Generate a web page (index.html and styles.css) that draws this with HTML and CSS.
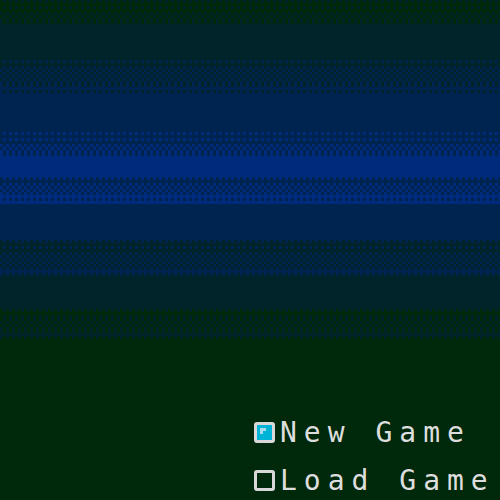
FILE: index.html
```html
<!DOCTYPE html>
<html lang="en">
<head>
    <meta charset="UTF-8">
    <title>Title Screen</title>
    <link rel="stylesheet" href="styles.css">
</head>
<body>
    <div class="screen">
        <!-- dithered sky, top to horizon -->
        <div class="sky">
            <div class="band d25 g-t" style="height:12px"></div>
            <div class="band d50 g-t" style="height:9px"></div>
            <div class="band d75 g-t" style="height:6px"></div>
            <div class="band teal" style="height:33px"></div>
            <div class="band d25 t-n" style="height:9px"></div>
            <div class="band d50 t-n" style="height:15px"></div>
            <div class="band d75 t-n" style="height:12px"></div>
            <div class="band navy" style="height:36px"></div>
            <div class="band d25 n-b" style="height:12px"></div>
            <div class="band d50 n-b" style="height:9px"></div>
            <div class="band d75 n-b" style="height:6px"></div>
            <div class="band blue" style="height:18px"></div>
            <div class="band d75 b-n" style="height:6px"></div>
            <div class="band d50 b-n" style="height:9px"></div>
            <div class="band d25 b-n" style="height:12px"></div>
            <div class="band navy" style="height:36px"></div>
            <div class="band d75 n-t" style="height:12px"></div>
            <div class="band d50 n-t" style="height:15px"></div>
            <div class="band d25 n-t" style="height:9px"></div>
            <div class="band teal" style="height:33px"></div>
            <div class="band d75 t-g" style="height:9px"></div>
            <div class="band d50 t-g" style="height:12px"></div>
            <div class="band d25 t-g" style="height:9px"></div>
        </div>

        <div class="ground">
            <ul class="menu">
                <li class="item selected"><span class="mark"><i></i></span><span class="label">New Game</span></li>
                <li class="item"><span class="mark"></span><span class="label">Load Game</span></li>
            </ul>
        </div>
    </div>
</body>
</html>
```

FILE: styles.css
```css
:root {
    --green: #00280a;
    --teal: #00242a;
    --navy: #002450;
    --blue: #002a7c;
    --px: 3px;
}
* { box-sizing: border-box; }
html, body { margin: 0; padding: 0; }
body {
    background: var(--green);
    font-family: "DejaVu Sans Mono", "Liberation Mono", monospace;
}
.screen {
    width: 500px;
    height: 500px;
    display: flex;
    flex-direction: column;
    overflow: hidden;
}
.sky { display: flex; flex-direction: column; }
.band { width: 100%; flex: none; }

.teal { background: var(--teal); }
.navy { background: var(--navy); }
.blue { background: var(--blue); }

/* colour pairs for the dither: --a is the base, --b the spots */
.g-t { --a: var(--green); --b: var(--teal); }
.t-g { --a: var(--teal); --b: var(--green); }
.t-n { --a: var(--teal); --b: var(--navy); }
.n-t { --a: var(--navy); --b: var(--teal); }
.n-b { --a: var(--navy); --b: var(--blue); }
.b-n { --a: var(--blue); --b: var(--navy); }

/* ordered dither steps */
.d25 {
    background: conic-gradient(from 90deg at var(--px) var(--px), var(--a) 0 75%, var(--b) 0);
    background-size: calc(var(--px) * 2) calc(var(--px) * 2);
}
.d50 {
    background: repeating-conic-gradient(var(--a) 0 25%, var(--b) 0 50%);
    background-size: calc(var(--px) * 2) calc(var(--px) * 2);
}
.d75 {
    background: conic-gradient(from 90deg at var(--px) var(--px), var(--b) 0 75%, var(--a) 0);
    background-size: calc(var(--px) * 2) calc(var(--px) * 2);
}

.ground {
    flex: 1;
    background: var(--green);
    padding: 83px 0 0 254px;
}
.menu {
    list-style: none;
    margin: 0;
    padding: 0;
    display: flex;
    flex-direction: column;
    gap: 27px;
}
.item {
    display: flex;
    align-items: center;
    height: 21px;
    gap: 5px;
}
.mark {
    width: 21px;
    height: 21px;
    border: 3px solid #d8d8d8;
    border-radius: 3px;
    position: relative;
    flex: none;
}
.selected .mark { background: #00b4d8; }
.mark i {
    position: absolute;
    left: 3px;
    top: 3px;
    width: 6px;
    height: 6px;
    background: #a8dcec;
    clip-path: polygon(0 0, 100% 0, 100% 50%, 50% 50%, 50% 100%, 0 100%);
}
.label {
    color: #dedede;
    font-size: 28px;
    line-height: 21px;
    letter-spacing: 7px;
    margin-right: -7px;
    white-space: pre;
}
```
